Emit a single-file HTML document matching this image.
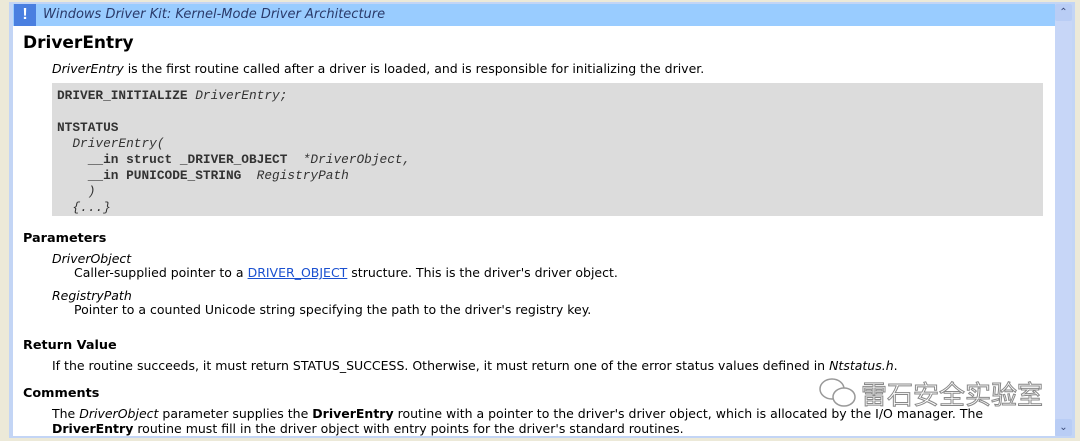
<!DOCTYPE html><html><head><meta charset="utf-8"><style>
body{margin:0;width:1080px;height:441px;background:#ece9d8;position:relative;overflow:hidden;font-family:"DejaVu Sans","Liberation Sans",sans-serif;font-size:12.5px;color:#000}
.frame{position:absolute;left:9px;top:2px;width:1066px;height:436px;background:#c3d5f5}
.page{position:absolute;left:13px;top:4px;width:1042px;height:432px;background:#fff;overflow:hidden}
.hdr{position:absolute;left:0;top:0;width:1042px;height:22px;background:#99ccff}
.ic{position:absolute;left:1px;top:0;width:22px;height:22px;background:#4a7fe0;color:#fff;font:bold 16px "Liberation Sans",sans-serif;text-align:center;line-height:22px}
.ht{position:absolute;left:30px;top:3px;font-style:italic;font-size:13px;color:#2a3a6a}
.a{position:absolute;white-space:nowrap}
h1{position:absolute;left:10px;top:29px;margin:0;font-size:17px;font-weight:bold}
h3{position:absolute;left:10px;margin:0;font-size:12.8px;font-weight:bold}
.code{position:absolute;left:39px;top:79px;width:991px;height:133px;background:#dcdcdc;font:bold 12.8px/16px "Liberation Mono",monospace;color:#333;padding:5px 0 0 5px;box-sizing:border-box;white-space:pre}
.code i{font-weight:normal}
.sb{position:absolute;left:1055px;top:4px;width:17px;height:432px;background:#c7d6f7}
.sbt{position:absolute;left:0;width:17px;height:17px;background:#b9cdf5;color:#3a4a7a;font-size:10px;text-align:center;line-height:17px;border-radius:2px}
a{color:#1a50d0}
</style></head><body>
<div class="frame"></div>
<div class="page">
<div class="hdr"><div class="ic">!</div><div class="ht">Windows Driver Kit: Kernel-Mode Driver Architecture</div></div>
<h1>DriverEntry</h1>
<div class="a" style="left:39px;top:57px"><i>DriverEntry</i> is the first routine called after a driver is loaded, and is responsible for initializing the driver.</div>
<div class="code">DRIVER_INITIALIZE <i>DriverEntry;</i>

NTSTATUS
  <i>DriverEntry(</i>
    __in struct _DRIVER_OBJECT  <i>*DriverObject,</i>
    __in PUNICODE_STRING  <i>RegistryPath</i>
    <i>)</i>
  <i>{...}</i></div>
<h3 style="top:227px">Parameters</h3>
<div class="a" style="left:39px;top:247px"><i>DriverObject</i></div>
<div class="a" style="left:61px;top:261px">Caller-supplied pointer to a <a href="#">DRIVER_OBJECT</a> structure. This is the driver's driver object.</div>
<div class="a" style="left:39px;top:284px"><i>RegistryPath</i></div>
<div class="a" style="left:61px;top:298px">Pointer to a counted Unicode string specifying the path to the driver's registry key.</div>
<h3 style="top:334px">Return Value</h3>
<div class="a" style="left:39px;top:354px">If the routine succeeds, it must return STATUS_SUCCESS. Otherwise, it must return one of the error status values defined in <i>Ntstatus.h</i>.</div>
<h3 style="top:382px">Comments</h3>
<div class="a" style="left:39px;top:402px">The <i>DriverObject</i> parameter supplies the <b>DriverEntry</b> routine with a pointer to the driver's driver object, which is allocated by the I/O manager. The</div>
<div class="a" style="left:39px;top:417px"><b>DriverEntry</b> routine must fill in the driver object with entry points for the driver's standard routines.</div>
<div class="a" style="left:848px;top:371px;font:26px 'Noto Sans CJK SC',sans-serif;color:#fff;-webkit-text-stroke:1px #888">雷石安全实验室</div>
<svg class="a" style="left:805px;top:373px" width="40" height="32"><ellipse cx="14" cy="12" rx="12" ry="10" fill="#fff" stroke="#999" stroke-width="1.5"/><ellipse cx="26" cy="20" rx="11" ry="9" fill="#fff" stroke="#999" stroke-width="1.5"/></svg>
</div>
<div class="sb"><div class="sbt" style="top:0">&#8963;</div><div class="sbt" style="top:415px">&#8964;</div></div>
</body></html>
